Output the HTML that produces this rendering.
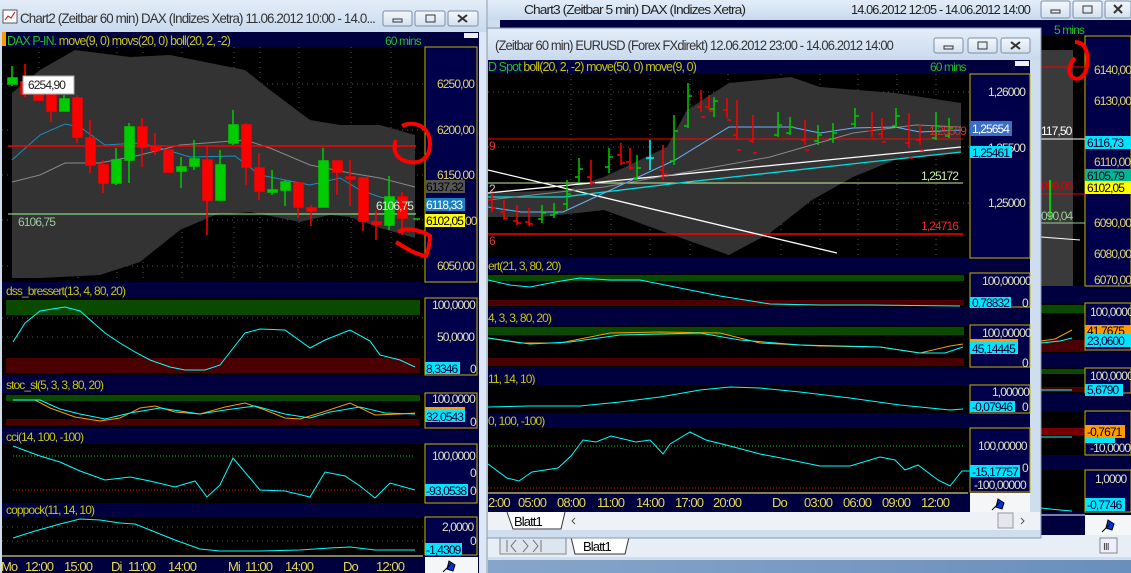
<!DOCTYPE html>
<html><head><meta charset="utf-8"><style>
html,body{margin:0;padding:0;background:#6d8fb5;}
svg{display:block;font-family:"Liberation Sans",sans-serif;}
text{letter-spacing:-0.9px;}
</style></head><body>
<svg width="1131" height="573" viewBox="0 0 1131 573" xmlns="http://www.w3.org/2000/svg">
<defs>
<linearGradient id="tb" x1="0" y1="0" x2="0" y2="1"><stop offset="0" stop-color="#e3edf8"/><stop offset="1" stop-color="#c9daee"/></linearGradient>
<linearGradient id="btn" x1="0" y1="0" x2="0" y2="1"><stop offset="0" stop-color="#f4f8fc"/><stop offset="1" stop-color="#d4e0ee"/></linearGradient>
<linearGradient id="desk" x1="0" y1="0" x2="1" y2="0"><stop offset="0" stop-color="#9db6d4"/><stop offset="1" stop-color="#6a8fbc"/></linearGradient>
</defs>
<rect width="1131" height="573" fill="url(#desk)"/>

<!-- ============ WINDOW 2 (behind, right) ============ -->
<rect x="488" y="0" width="643" height="560" fill="#cfdeef"/>
<rect x="488" y="0" width="643" height="20" fill="url(#tb)"/>
<text x="524" y="14" font-size="13" fill="#222" textLength="221" lengthAdjust="spacingAndGlyphs">Chart3 (Zeitbar 5 min)  DAX (Indizes Xetra)</text>
<text x="851" y="14" font-size="13" fill="#222" textLength="179" lengthAdjust="spacingAndGlyphs">14.06.2012 12:05 - 14.06.2012 14:00</text>
<rect x="1041" y="1" width="29" height="17" rx="2" fill="url(#btn)" stroke="#7a8ea8"/>
<rect x="1073" y="1" width="29" height="17" rx="2" fill="url(#btn)" stroke="#7a8ea8"/>
<rect x="1105" y="1" width="26" height="17" rx="2" fill="url(#btn)" stroke="#7a8ea8"/>
<rect x="1051" y="10" width="9" height="3" fill="none" stroke="#333"/>
<rect x="1083" y="6" width="9" height="7" fill="none" stroke="#333"/>
<path d="M1114 5l8 8M1122 5l-8 8" stroke="#333" stroke-width="2"/>
<rect x="500" y="20" width="631" height="515" fill="#00003e"/>
<text x="1054" y="34" font-size="12" fill="#1fc01f">5 mins</text>
<rect x="1041" y="36" width="44" height="250" fill="#000"/>
<rect x="1041" y="50" width="32" height="236" fill="#3a3a3a"/>
<line x1="1041" y1="67" x2="1085" y2="67" stroke="#e00"/>
<rect x="1085" y="36" width="46" height="250" fill="#00004a" stroke="#c8b400"/>
<g font-size="12" fill="#e0d36a">
<text x="1094" y="74">6140,00</text><text x="1094" y="105">6130,00</text><text x="1094" y="166">6110,00</text><text x="1094" y="227">6090,00</text><text x="1094" y="258">6080,00</text><text x="1094" y="284">6070,00</text>
</g>
<line x1="1041" y1="139" x2="1085" y2="139" stroke="#fff"/>
<text x="1041" y="135" font-size="12" fill="#fff">117,50</text>
<rect x="1085" y="136" width="46" height="13" fill="#00e5ff"/><text x="1087" y="147" font-size="12" fill="#003">6116,73</text>
<rect x="1085" y="169" width="46" height="13" fill="#00b890"/><text x="1087" y="180" font-size="12" fill="#002">6105,79</text>
<rect x="1085" y="181" width="46" height="13" fill="#ffff00"/><text x="1087" y="192" font-size="12" fill="#000">6102,05</text>
<text x="1041" y="190" font-size="12" fill="#d00">099,06</text>
<line x1="1041" y1="194" x2="1085" y2="194" stroke="#e00"/>
<line x1="1050" y1="180" x2="1050" y2="220" stroke="#0c0" stroke-width="2"/>
<text x="1041" y="220" font-size="12" fill="#9c9">090,04</text>
<line x1="1041" y1="223" x2="1085" y2="223" stroke="#9c9"/>
<line x1="1041" y1="237" x2="1080" y2="240" stroke="#fff"/>
<!-- w2 subpanels -->
<rect x="1041" y="303" width="44" height="50" fill="#000"/>
<rect x="1041" y="305" width="44" height="8" fill="#0a4a00"/>
<rect x="1041" y="340" width="44" height="12" fill="#4a0000"/>
<polyline points="1041,341 1055,339 1072,330" fill="none" stroke="#f90"/>
<polyline points="1041,343 1060,341 1072,338" fill="none" stroke="#0ff"/>
<rect x="1085" y="303" width="46" height="47" fill="#00004a" stroke="#c8b400"/>
<text x="1090" y="316" font-size="12" fill="#e0e0c0">100,0000</text>
<rect x="1085" y="325" width="46" height="10" fill="#ff9a00"/><text x="1087" y="335" font-size="12" fill="#000">41,7675</text>
<rect x="1085" y="334" width="46" height="13" fill="#00e5ff"/><text x="1087" y="345" font-size="12" fill="#003">23,0600</text>
<rect x="1041" y="368" width="44" height="25" fill="#000"/>
<rect x="1041" y="369" width="44" height="5" fill="#0a4a00"/>
<rect x="1041" y="387" width="44" height="5" fill="#4a0000"/>
<line x1="1041" y1="390" x2="1072" y2="390" stroke="#0ff"/>
<rect x="1085" y="368" width="46" height="25" fill="#00004a" stroke="#c8b400"/>
<text x="1090" y="380" font-size="12" fill="#e0e0c0">100,0000</text>
<rect x="1085" y="384" width="38" height="12" fill="#00e5ff"/><text x="1087" y="394" font-size="12" fill="#003">5,6790</text>
<rect x="1041" y="411" width="44" height="44" fill="#000"/>
<rect x="1041" y="428" width="44" height="7" fill="#7a0000"/>
<line x1="1041" y1="437" x2="1072" y2="437" stroke="#0ff"/>
<rect x="1085" y="411" width="46" height="44" fill="#00004a" stroke="#c8b400"/>
<rect x="1085" y="425" width="40" height="13" fill="#ff9a00"/><text x="1087" y="436" font-size="12" fill="#000">-0,7671</text>
<rect x="1085" y="438" width="30" height="5" fill="#00e5ff"/>
<text x="1090" y="452" font-size="12" fill="#e0e0c0">-10,0000</text>
<rect x="1041" y="470" width="44" height="42" fill="#000"/>
<polyline points="1041,508 1060,510 1072,511" fill="none" stroke="#0ff"/>
<rect x="1085" y="470" width="46" height="42" fill="#00004a" stroke="#c8b400"/>
<text x="1095" y="483" font-size="12" fill="#e0e0c0">1,0000</text>
<rect x="1085" y="498" width="40" height="13" fill="#00e5ff"/><text x="1087" y="509" font-size="12" fill="#003">-0,7746</text>
<line x1="1041" y1="515" x2="1085" y2="515" stroke="#fff"/>
<rect x="1085" y="515" width="46" height="20" fill="#f4f6f8"/>
<path d="M1102 532l8-8M1108 520l6 4-2 6-6-2z" stroke="#000" fill="#0033dd"/>
<rect x="488" y="535" width="643" height="22" fill="#e8eef5"/>
<rect x="1100" y="538" width="17" height="15" fill="#eef" stroke="#888"/>
<text x="1103" y="550" font-size="10" fill="#333">III</text>
<!-- w2 tabs -->
<rect x="500" y="537" width="66" height="17" fill="#dde6ef" stroke="#888"/>
<path d="M507 540v12M516 540l-5 6 5 6M523 540l5 6-5 6M533 540l5 6-5 6M541 540v12" stroke="#777" fill="none"/>
<path d="M571 537l4 17h50l4-17z" fill="#fff" stroke="#333"/>
<text x="583" y="551" font-size="13" fill="#000">Blatt1</text>

<!-- ============ WINDOW 1 (left) ============ -->
<rect x="0" y="0" width="488" height="573" fill="#cfdeef"/>
<rect x="0" y="0" width="488" height="32" fill="url(#tb)"/>
<rect x="3" y="10" width="14" height="13" fill="#fff" stroke="#555"/><path d="M5 20l3-4 3 2 4-6" stroke="#d00" fill="none"/>
<text x="20" y="23" font-size="14" fill="#333" textLength="355" lengthAdjust="spacingAndGlyphs">Chart2 (Zeitbar 60 min)  DAX (Indizes Xetra) 11.06.2012 10:00 - 14.0...</text>
<rect x="383" y="11" width="29" height="15" rx="2" fill="url(#btn)" stroke="#7a8ea8"/>
<rect x="415" y="11" width="30" height="15" rx="2" fill="url(#btn)" stroke="#7a8ea8"/>
<rect x="448" y="11" width="30" height="15" rx="2" fill="url(#btn)" stroke="#7a8ea8"/>
<rect x="393" y="19" width="9" height="3" fill="none" stroke="#333"/>
<rect x="426" y="15" width="9" height="7" fill="none" stroke="#333"/>
<path d="M458 15l9 7M467 15l-9 7" stroke="#333" stroke-width="2"/>
<rect x="2" y="32" width="477" height="541" fill="#00003e"/>
<rect x="479" y="32" width="9" height="541" fill="#dce8f4"/>
<line x1="487" y1="0" x2="487" y2="573" stroke="#8a9ab0"/>
<rect x="464" y="33" width="14" height="5" fill="#eee"/>
<rect x="2" y="32" width="4" height="14" fill="#f90"/>
<text x="7" y="45" font-size="13" textLength="223" lengthAdjust="spacingAndGlyphs"><tspan fill="#1fc01f">DAX P-IN. </tspan><tspan fill="#c8c800">move(9, 0) movs(20, 0) boll(20, 2, -2)</tspan></text>
<text x="385" y="45" font-size="12" fill="#1fc01f">60 mins</text>
<!-- main chart -->
<rect x="2" y="47" width="423" height="235" fill="#000"/>
<g stroke="#555" stroke-dasharray="1,4">
<line x1="39" y1="47" x2="39" y2="282"/><line x1="78" y1="47" x2="78" y2="282"/><line x1="117" y1="47" x2="117" y2="282"/><line x1="143" y1="47" x2="143" y2="282"/><line x1="182" y1="47" x2="182" y2="282"/><line x1="234" y1="47" x2="234" y2="282"/><line x1="260" y1="47" x2="260" y2="282"/><line x1="299" y1="47" x2="299" y2="282"/><line x1="351" y1="47" x2="351" y2="282"/><line x1="391" y1="47" x2="391" y2="282"/>
<line x1="2" y1="84" x2="425" y2="84"/><line x1="2" y1="130" x2="425" y2="130"/><line x1="2" y1="175" x2="425" y2="175"/><line x1="2" y1="220" x2="425" y2="220"/><line x1="2" y1="266" x2="425" y2="266"/>
</g>
<polygon fill="#333" points="12,93 40,70 75,50 130,57 170,55 245,70 270,90 310,120 340,125 380,125 415,135 415,238 380,228 350,217 330,215 300,222 250,212 215,215 180,230 140,262 100,275 40,278 12,278"/>
<polyline fill="none" stroke="#888" points="12,182 40,175 65,163 100,163 140,155 180,145 245,140 270,148 310,165 350,173 380,178 415,187"/>
<polyline fill="none" stroke="#1a8fc0" points="12,160 40,135 65,124 80,127 105,145 140,143 160,148 190,157 235,156 260,175 310,185 340,178 360,190 380,197 410,203"/>
<line x1="8" y1="146" x2="416" y2="146" stroke="#f00" stroke-width="1.5"/>
<line x1="8" y1="214" x2="416" y2="214" stroke="#9f9"/>
<g stroke-width="1.5">
<g stroke="#0c0" fill="#0c0">
<line x1="12" y1="66" x2="12" y2="86"/><rect x="8" y="78" width="9" height="6"/>
<line x1="64" y1="95" x2="64" y2="111"/><rect x="60" y="99" width="9" height="12"/>
<line x1="116" y1="148" x2="116" y2="185"/><rect x="112" y="160" width="9" height="23"/>
<line x1="129" y1="123" x2="129" y2="183"/><rect x="125" y="127" width="9" height="33"/>
<line x1="181" y1="157" x2="181" y2="188"/><rect x="177" y="167" width="9" height="4"/>
<line x1="194" y1="140" x2="194" y2="170"/><rect x="190" y="159" width="9" height="7"/>
<line x1="220" y1="150" x2="220" y2="200"/><rect x="216" y="165" width="9" height="35"/>
<line x1="233" y1="110" x2="233" y2="145"/><rect x="229" y="125" width="9" height="18"/>
<line x1="272" y1="170" x2="272" y2="195"/><rect x="268" y="190" width="9" height="2"/>
<line x1="285" y1="180" x2="285" y2="206"/><rect x="281" y="182" width="9" height="8"/>
<line x1="323" y1="148" x2="323" y2="207"/><rect x="319" y="161" width="9" height="46"/>
<line x1="389" y1="176" x2="389" y2="230"/><rect x="385" y="197" width="9" height="28"/>
<line x1="413" y1="219" x2="420" y2="219"/>
</g>
<g stroke="#f00" fill="#f00">
<line x1="25" y1="64" x2="25" y2="97"/><rect x="21" y="82" width="9" height="12"/>
<line x1="38" y1="93" x2="38" y2="100"/><rect x="34" y="95" width="9" height="5"/>
<line x1="51" y1="93" x2="51" y2="122"/><rect x="47" y="95" width="9" height="16"/>
<line x1="77" y1="95" x2="77" y2="143"/><rect x="73" y="98" width="9" height="39"/>
<line x1="90" y1="120" x2="90" y2="173"/><rect x="86" y="138" width="9" height="27"/>
<line x1="103" y1="160" x2="103" y2="193"/><rect x="99" y="165" width="9" height="18"/>
<line x1="142" y1="118" x2="142" y2="167"/><rect x="138" y="127" width="9" height="20"/>
<line x1="155" y1="133" x2="155" y2="155"/><rect x="151" y="146" width="9" height="4"/>
<line x1="168" y1="150" x2="168" y2="172"/><rect x="164" y="150" width="9" height="22"/>
<line x1="207" y1="145" x2="207" y2="235"/><rect x="203" y="160" width="9" height="40"/>
<line x1="246" y1="123" x2="246" y2="185"/><rect x="242" y="125" width="9" height="42"/>
<line x1="259" y1="153" x2="259" y2="200"/><rect x="255" y="168" width="9" height="23"/>
<line x1="298" y1="183" x2="298" y2="218"/><rect x="294" y="183" width="9" height="24"/>
<line x1="311" y1="205" x2="311" y2="226"/><rect x="307" y="208" width="9" height="3"/>
<line x1="337" y1="161" x2="337" y2="195"/><rect x="333" y="161" width="9" height="11"/>
<line x1="350" y1="160" x2="350" y2="206"/><rect x="346" y="177" width="9" height="2"/>
<line x1="363" y1="182" x2="363" y2="231"/><rect x="359" y="178" width="9" height="43"/>
<line x1="376" y1="210" x2="376" y2="240"/><rect x="372" y="222" width="9" height="2"/>
<line x1="402" y1="192" x2="402" y2="235"/><rect x="398" y="197" width="9" height="21"/>
</g></g>
<rect x="23" y="76" width="51" height="18" fill="#fff" stroke="#aaa"/>
<text x="28" y="89" font-size="12" fill="#222">6254,90</text>
<text x="18" y="226" font-size="12" fill="#9fc9a0">6106,75</text>
<text x="376" y="210" font-size="12" fill="#d0f0d0">6106,75</text>
<rect x="425" y="47" width="52" height="235" fill="#00004a" stroke="#c8b400"/>
<g font-size="12" fill="#e0d36a"><text x="437" y="88">6250,00</text><text x="437" y="134">6200,00</text><text x="437" y="179">6150,00</text><text x="437" y="270">6050,00</text></g>
<rect x="425" y="180" width="40" height="13" fill="#555"/><text x="426" y="191" font-size="12" fill="#000">6137,32</text>
<rect x="425" y="198" width="40" height="13" fill="#1a80c0"/><text x="426" y="209" font-size="12" fill="#fff">6118,33</text>
<rect x="425" y="214" width="40" height="13" fill="#ffff00"/><text x="426" y="225" font-size="12" fill="#000">6102,05</text><text x="465" y="225" font-size="12" fill="#e0d36a">00</text>
<!-- dss -->
<text x="6" y="295" font-size="12" fill="#c8c800">dss_bressert(13, 4, 80, 20)</text>
<rect x="2" y="298" width="423" height="77" fill="#000"/>
<rect x="6" y="300" width="414" height="15" fill="#0a4a00"/>
<rect x="6" y="358" width="414" height="15" fill="#4a0000"/>
<g stroke="#555" stroke-dasharray="1,4"><line x1="2" y1="318" x2="425" y2="318"/><line x1="2" y1="337" x2="425" y2="337"/></g>
<polyline fill="none" stroke="#0ff" points="13,342 25,323 40,311 65,307 80,311 105,333 120,343 135,352 150,360 170,367 185,370 205,370 220,365 245,333 260,329 285,330 310,348 325,340 350,330 370,341 380,355 400,360 415,367"/>
<rect x="425" y="298" width="52" height="77" fill="#00004a" stroke="#c8b400"/>
<text x="432" y="309" font-size="12" fill="#e0e0c0">100,0000</text><text x="437" y="341" font-size="12" fill="#e0e0c0">50,0000</text>
<rect x="425" y="362" width="35" height="12" fill="#00e5ff"/><text x="426" y="373" font-size="12" fill="#003">8,3346</text><text x="470" y="373" font-size="12" fill="#e0e0c0">0</text>
<!-- stoc -->
<text x="6" y="389" font-size="12" fill="#c8c800">stoc_sl(5, 3, 3, 80, 20)</text>
<rect x="2" y="393" width="423" height="35" fill="#000"/>
<rect x="6" y="395" width="414" height="6" fill="#0a4a00"/>
<rect x="6" y="419" width="414" height="6" fill="#4a0000"/>
<polyline fill="none" stroke="#f90" points="13,400 35,400 50,408 75,417 100,421 120,418 140,408 155,406 175,412 200,414 225,407 245,403 265,410 285,418 300,419 320,413 350,403 375,415 400,414 415,413"/>
<polyline fill="none" stroke="#0ff" points="13,400 40,400 60,409 80,414 105,419 130,413 160,408 200,414 225,410 255,406 285,414 310,418 330,412 360,407 385,413 415,414"/>
<rect x="425" y="393" width="52" height="35" fill="#00004a" stroke="#c8b400"/>
<text x="432" y="403" font-size="12" fill="#e0e0c0">100,0000</text>
<rect x="425" y="407" width="40" height="3" fill="#ff9a00"/><rect x="425" y="410" width="40" height="12" fill="#00e5ff"/><text x="426" y="421" font-size="12" fill="#003">32,0543</text><text x="470" y="426" font-size="12" fill="#e0e0c0">0</text>
<!-- cci -->
<text x="6" y="441" font-size="12" fill="#c8c800">cci(14, 100, -100)</text>
<rect x="2" y="444" width="423" height="59" fill="#000"/>
<line x1="13" y1="456" x2="415" y2="456" stroke="#0c0" stroke-dasharray="1,2"/>
<line x1="13" y1="490" x2="415" y2="490" stroke="#e00" stroke-dasharray="1,2"/>
<polyline fill="none" stroke="#0ff" points="13,446 40,456 60,462 80,471 105,480 130,477 150,481 175,487 195,481 207,497 220,485 233,458 260,490 285,491 310,497 325,472 345,476 360,486 375,498 390,483 415,490"/>
<rect x="425" y="444" width="52" height="59" fill="#00004a" stroke="#c8b400"/>
<text x="432" y="460" font-size="12" fill="#e0e0c0">100,0000</text><text x="470" y="477" font-size="12" fill="#e0e0c0">0</text>
<rect x="425" y="484" width="43" height="12" fill="#00e5ff"/><text x="426" y="495" font-size="12" fill="#003">-93,0538</text><text x="470" y="495" font-size="12" fill="#e0e0c0">0</text>
<!-- coppock -->
<text x="6" y="514" font-size="12" fill="#c8c800">coppock(11, 14, 10)</text>
<rect x="2" y="517" width="423" height="38" fill="#000"/>
<g stroke="#555" stroke-dasharray="1,4"><line x1="2" y1="527" x2="425" y2="527"/><line x1="2" y1="541" x2="425" y2="541"/></g>
<polyline fill="none" stroke="#0ff" points="13,538 35,531 60,524 80,519 100,520 120,523 135,524 150,530 175,540 200,549 220,551 260,551 300,550 330,548 350,547 375,550 415,550"/>
<rect x="425" y="517" width="52" height="38" fill="#00004a" stroke="#c8b400"/>
<text x="442" y="531" font-size="12" fill="#e0e0c0">2,0000</text><text x="470" y="545" font-size="12" fill="#e0e0c0">0</text>
<rect x="425" y="543" width="37" height="12" fill="#00e5ff"/><text x="426" y="554" font-size="12" fill="#003">-1,4309</text>
<!-- time axis -->
<rect x="2" y="555" width="423" height="18" fill="#00003e"/>
<line x1="2" y1="556" x2="423" y2="556" stroke="#ffff80"/>
<g font-size="13" fill="#e6d94a"><text x="1" y="571">Mo</text><text x="25" y="571">12:00</text><text x="64" y="571">15:00</text><text x="111" y="571">Di</text><text x="128" y="571">11:00</text><text x="168" y="571">14:00</text><text x="228" y="571">Mi</text><text x="245" y="571">11:00</text><text x="285" y="571">14:00</text><text x="343" y="571">Do</text><text x="376" y="571">12:00</text></g>
<rect x="425" y="557" width="53" height="16" fill="#f4f6f8"/>
<path d="M443 572l8-8M449 561l6 4-2 6-6-2z" stroke="#000" fill="#0033dd"/>
<!-- annotations w1 -->
<path d="M402 126c12-6 28 0 28 18 0 14-10 20-20 18-14-2-18-12-14-22" fill="none" stroke="#f00" stroke-width="4"/>
<path d="M398 232c10-6 26 0 32 4 0 8-2 14-4 20-12-2-20-8-30-14" fill="none" stroke="#f00" stroke-width="4"/>

<!-- ============ WINDOW 3 (front, EURUSD) ============ -->
<rect x="487" y="28" width="554" height="510" fill="#cfdeef" stroke="#8a9ab0"/>
<rect x="488" y="29" width="552" height="31" fill="url(#tb)"/>
<text x="495" y="50" font-size="14" fill="#333" textLength="398" lengthAdjust="spacingAndGlyphs">(Zeitbar 60 min)  EURUSD (Forex FXdirekt) 12.06.2012 23:00 - 14.06.2012 14:00</text>
<rect x="934" y="38" width="29" height="15" rx="2" fill="url(#btn)" stroke="#7a8ea8"/>
<rect x="968" y="38" width="29" height="15" rx="2" fill="url(#btn)" stroke="#7a8ea8"/>
<rect x="1001" y="38" width="29" height="15" rx="2" fill="url(#btn)" stroke="#7a8ea8"/>
<rect x="944" y="46" width="9" height="3" fill="none" stroke="#333"/>
<rect x="978" y="42" width="9" height="7" fill="none" stroke="#333"/>
<path d="M1011 42l9 7M1020 42l-9 7" stroke="#333" stroke-width="2"/>
<rect x="488" y="60" width="542" height="452" fill="#00003e"/>
<rect x="1015" y="61" width="14" height="5" fill="#eee"/>
<text x="488" y="71" font-size="13" textLength="208" lengthAdjust="spacingAndGlyphs"><tspan fill="#1fc01f">D Spot </tspan><tspan fill="#c8c800">boll(20, 2, -2) move(50, 0) move(9, 0)</tspan></text>
<text x="930" y="71" font-size="12" fill="#1fc01f">60 mins</text>
<rect x="488" y="74" width="482" height="184" fill="#000"/>
<g stroke="#555" stroke-dasharray="1,4">
<line x1="571" y1="74" x2="571" y2="258"/><line x1="611" y1="74" x2="611" y2="258"/><line x1="650" y1="74" x2="650" y2="258"/><line x1="690" y1="74" x2="690" y2="258"/><line x1="728" y1="74" x2="728" y2="258"/><line x1="781" y1="74" x2="781" y2="258"/><line x1="820" y1="74" x2="820" y2="258"/><line x1="858" y1="74" x2="858" y2="258"/><line x1="897" y1="74" x2="897" y2="258"/><line x1="936" y1="74" x2="936" y2="258"/>
<line x1="488" y1="92" x2="970" y2="92"/><line x1="488" y1="147" x2="970" y2="147"/><line x1="488" y1="203" x2="970" y2="203"/>
</g>
<polygon fill="#333" points="488,193 563,190 604,177 667,147 687,110 729,83 791,77 820,87 895,93 961,103 961,153 895,160 853,177 812,200 770,233 729,255 667,233 604,210 542,217 488,217"/>
<line x1="488" y1="139" x2="963" y2="139" stroke="#f00"/>
<line x1="488" y1="183" x2="963" y2="183" stroke="#c8f0a0"/>
<line x1="488" y1="234" x2="963" y2="234" stroke="#f00" stroke-width="1.5"/>
<line x1="488" y1="170" x2="837" y2="253" stroke="#fff" stroke-width="1.3"/>
<line x1="488" y1="193" x2="961" y2="147" stroke="#fff" stroke-width="1.3"/>
<polyline fill="none" stroke="#0dd" stroke-width="1.3" points="488,197 563,197 687,182 961,152"/>
<polyline fill="none" stroke="#888" points="488,200 604,187 770,157 853,133 916,125 961,127"/>
<polyline fill="none" stroke="#6ab0ff" points="488,207 521,212 563,212 604,193 675,160 729,127 791,127 820,133 853,128 895,127 920,132 961,130"/>
<g stroke-width="1.5" fill="none">
<path stroke="#f00" d="M492 190v22m-4-12h4m0 8h4M504 200v20m-4-8h4m0 6h4M517 205v20m-4-4h4m0 2h4M529 208v18m-4-4h4m0 2h4M591 160v25m-4-8h4m0 6h4M621 143v22m-4-10h4m0 8h4M630 148v22m-4-8h4m0 6h4M663 145v35m-4-10h4m0 4h4M701 90v22m-4-5h4m0 10h4M709 95v15m-4-3h4m0 4h4M727 98v20m-4-8h4m0 10h4M737 100v40m-4-5h4m0 15h4M753 115v28m-4-2h4m0 12h4M805 120v25m-4-5h4m0 10h4M872 112v25m-4-6h4m0 8h4M882 118v20m-4-4h4m0 8h4M909 113v35m-4-5h4m0 15h4M920 125v20m-4-5h4m0 10h4"/>
<path stroke="#0c0" d="M542 205v18m-4-4h4m0-6h4M554 203v15m-4-3h4m0-2h4M567 180v30m-4-6h4m0-10h4M579 158v25m-4-6h4m0-8h4M609 148v25m-4-6h4m0-10h4M637 155v25m-4-2h4m0-10h4M674 115v50m-4-4h4m0-30h4M688 83v45m-4-2h4m0-30h4M714 97v20m-4-8h4m0-8h4M778 112v25m-4-2h4m0-10h4M790 117v18m-4-2h4m0-6h4M818 125v20m-4-4h4m0-6h4M833 123v20m-4-4h4m0-6h4M855 108v20m-4-4h4m0-8h4M896 108v20m-4-2h4m0-10h4M936 112v28m-4-2h4m0-12h4M949 118v20m-4-2h4m0-8h4"/>
<path stroke="#0ff" d="M650 140v30m-4-12h4m0 0h4"/>
</g>
<g font-size="12"><text x="929" y="135" fill="#c33">1,25509</text><text x="921" y="180" fill="#c8f0a0">1,25172</text><text x="921" y="230" fill="#f22">1,24716</text><text x="489" y="150" fill="#d33">9</text><text x="489" y="193" fill="#ccc">2</text><text x="489" y="245" fill="#d33">6</text></g>
<rect x="970" y="74" width="60" height="184" fill="#00004a" stroke="#c8b400"/>
<g font-size="12" fill="#e0e0c0"><text x="988" y="96">1,26000</text><text x="988" y="152">1,25500</text><text x="988" y="207">1,25000</text></g>
<rect x="970" y="121" width="42" height="15" fill="#3a6ec8"/><text x="972" y="133" font-size="12" fill="#fff">1,25654</text>
<rect x="970" y="146" width="42" height="12" fill="#00e5ff"/><text x="972" y="157" font-size="12" fill="#003">1,25461</text>
<!-- w3 sub1 -->
<text x="488" y="270" font-size="12" fill="#c8c800">ert(21, 3, 80, 20)</text>
<rect x="488" y="273" width="482" height="34" fill="#000"/>
<rect x="488" y="275" width="476" height="6" fill="#0a4a00"/>
<rect x="488" y="300" width="476" height="6" fill="#4a0000"/>
<polyline fill="none" stroke="#0ff" points="488,280 510,285 530,287 555,282 580,278 610,280 640,280 680,288 720,296 770,304 820,305 870,305 960,306"/>
<rect x="970" y="273" width="60" height="34" fill="#00004a" stroke="#c8b400"/>
<text x="982" y="285" font-size="12" fill="#e0e0c0">100,00000</text>
<rect x="970" y="297" width="41" height="11" fill="#00e5ff"/><text x="972" y="307" font-size="12" fill="#003">0,78832</text><text x="1022" y="307" font-size="12" fill="#e0e0c0">0</text>
<!-- w3 sub2 -->
<text x="488" y="322" font-size="12" fill="#c8c800">4, 3, 3, 80, 20)</text>
<rect x="488" y="325" width="482" height="42" fill="#000"/>
<rect x="488" y="327" width="476" height="8" fill="#0a4a00"/>
<rect x="488" y="358" width="476" height="8" fill="#4a0000"/>
<polyline fill="none" stroke="#f90" points="488,338 520,343 560,343 610,333 660,332 720,333 760,343 820,346 880,347 920,353 950,346 963,344"/>
<polyline fill="none" stroke="#0ff" points="488,338 530,344 570,342 620,335 700,333 740,340 800,345 880,347 920,353 945,353 963,347"/>
<rect x="970" y="325" width="60" height="42" fill="#00004a" stroke="#c8b400"/>
<text x="982" y="337" font-size="12" fill="#e0e0c0">100,00000</text>
<rect x="970" y="339" width="48" height="3" fill="#ff9a00"/><rect x="970" y="342" width="48" height="12" fill="#00e5ff"/><text x="972" y="353" font-size="12" fill="#003">45,14445</text><text x="1022" y="367" font-size="12" fill="#e0e0c0">0</text>
<!-- w3 sub3 -->
<text x="488" y="383" font-size="12" fill="#c8c800">11, 14, 10)</text>
<rect x="488" y="385" width="482" height="28" fill="#000"/>
<polyline fill="none" stroke="#0ff" points="488,407 530,406 580,406 620,402 660,397 700,390 730,387 760,388 800,392 850,398 900,405 950,410 963,409"/>
<rect x="970" y="385" width="60" height="28" fill="#00004a" stroke="#c8b400"/>
<text x="992" y="396" font-size="12" fill="#e0e0c0">1,00000</text>
<rect x="970" y="401" width="45" height="11" fill="#00e5ff"/><text x="972" y="411" font-size="12" fill="#003">-0,07946</text><text x="1022" y="411" font-size="12" fill="#e0e0c0">0</text>
<!-- w3 sub4 -->
<text x="488" y="425" font-size="12" fill="#c8c800">0, 100, -100)</text>
<rect x="488" y="428" width="482" height="64" fill="#000"/>
<line x1="488" y1="446" x2="963" y2="446" stroke="#0c0" stroke-dasharray="1,2"/>
<line x1="488" y1="488" x2="963" y2="488" stroke="#e00" stroke-dasharray="1,2"/>
<polyline fill="none" stroke="#0ff" points="488,464 507,478 519,481 532,472 558,468 571,456 583,440 596,442 611,436 636,442 650,440 663,454 670,444 690,432 706,440 730,446 760,454 781,458 820,466 850,466 880,457 895,460 905,470 918,465 938,480 950,486 962,471 980,471"/>
<rect x="970" y="428" width="60" height="64" fill="#00004a" stroke="#c8b400"/>
<text x="978" y="450" font-size="12" fill="#e0e0c0">100,00000</text>
<rect x="970" y="465" width="50" height="12" fill="#00e5ff"/><text x="972" y="476" font-size="12" fill="#003">-15,17757</text><text x="1022" y="472" font-size="12" fill="#e0e0c0">0</text>
<text x="974" y="489" font-size="12" fill="#e0e0c0">-100,00000</text>
<!-- w3 time axis -->
<line x1="488" y1="493" x2="968" y2="493" stroke="#ffff80"/>
<g font-size="13" fill="#e6d94a"><text x="488" y="507">2:00</text><text x="518" y="507">05:00</text><text x="557" y="507">08:00</text><text x="597" y="507">11:00</text><text x="636" y="507">14:00</text><text x="675" y="507">17:00</text><text x="713" y="507">20:00</text><text x="772" y="507">Do</text><text x="804" y="507">03:00</text><text x="843" y="507">06:00</text><text x="882" y="507">09:00</text><text x="921" y="507">12:00</text></g>
<rect x="970" y="493" width="60" height="19" fill="#f4f6f8"/>
<path d="M992 510l8-8M998 499l6 4-2 6-6-2z" stroke="#000" fill="#0033dd"/>
<!-- w3 tabs -->
<rect x="488" y="512" width="552" height="18" fill="#eef2f6"/>
<path d="M507 512l6 17h48l4-17" fill="#fff" stroke="#333"/>
<text x="514" y="526" font-size="13" fill="#000">Blatt1</text>
<rect x="998" y="513" width="15" height="15" fill="#e4e8ee" stroke="#999"/>
<path d="M575 518l-3 3 3 3M1021 518l3 3-3 3" stroke="#555" fill="none"/>
<!-- annotation w2 -->
<path d="M1075 42c10 0 14 10 12 24-2 12-10 16-16 10-4-6 0-14 4-18" fill="none" stroke="#f00" stroke-width="4"/>
</svg>
</body></html>
